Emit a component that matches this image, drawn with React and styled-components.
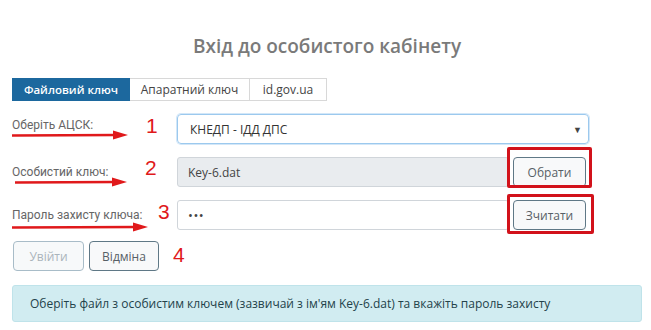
import React from "react";
import styled, { createGlobalStyle } from "styled-components";

const GlobalStyle = createGlobalStyle`
  html, body { margin: 0; padding: 0; background: #fff; }
  body { font-family: "Open Sans", "Noto Sans", sans-serif; color: #333; }
  * { box-sizing: border-box; }
`;

const Page = styled.div`
  width: 651px;
  height: 330px;
  padding: 0 9px 0 12px;
  overflow: hidden;
`;

const Title = styled.h2`
  margin: 0;
  padding-top: 33px;
  height: 78px;
  text-align: center;
  font-size: 19px;
  font-weight: 600;
  color: #7a7a7a;
  line-height: 26px;
`;

const Tabs = styled.div`
  display: flex;
  height: 23px;
`;

const Tab = styled.div`
  display: flex;
  align-items: center;
  justify-content: center;
  width: ${(p) => p.w}px;
  font-size: ${(p) => (p.active ? 11.5 : 12)}px;
  font-weight: ${(p) => (p.active ? 600 : 400)};
  color: ${(p) => (p.active ? "#fff" : "#444")};
  background: ${(p) => (p.active ? "#1c689e" : "#fff")};
  border: 1px solid ${(p) => (p.active ? "#1c689e" : "#d8d8d8")};
  border-left-width: ${(p) => (p.first ? 1 : 0)}px;
`;

const Form = styled.div`
  display: flex;
  flex-direction: column;
  gap: 13px;
  margin-top: 13px;
`;

const Row = styled.div`
  display: grid;
  grid-template-columns: 165px 1fr;
  align-items: center;
  height: 30px;
`;

const Label = styled.div`
  position: relative;
  font-family: Roboto, "Open Sans", sans-serif;
  font-size: 12px;
  color: #666;
  line-height: 18px;
  margin-bottom: ${(p) => p.raise || 0}px;
`;

const ArrowBox = styled.svg`
  position: absolute;
  left: ${(p) => p.x}px;
  top: ${(p) => p.y}px;
`;

const Num = styled.span`
  position: absolute;
  left: ${(p) => p.x}px;
  top: ${(p) => p.y}px;
  font-family: "Liberation Sans", Arial, sans-serif;
  font-size: 21px;
  line-height: 21px;
  color: #e0191b;
`;

const Select = styled.div`
  display: flex;
  align-items: center;
  justify-content: space-between;
  width: 412px;
  height: 30px;
  padding: 0 6px 0 12px;
  border: 1px solid #9cc9ee;
  border-radius: 4px;
  box-shadow: 0 0 0 1px rgba(130, 185, 235, 0.35);
  font-size: 12px;
  color: #333;
`;

const Caret = styled.span`
  font-size: 9px;
  color: #444;
`;

const Control = styled.div`
  display: flex;
  align-items: center;
  gap: 4px;
  width: 409px;
`;

const Input = styled.div`
  flex: 1;
  height: 30px;
  display: flex;
  align-items: center;
  padding: 0 10px;
  border: 1px solid #d0d5da;
  border-radius: 3px;
  background: ${(p) => (p.disabled ? "#e9ecef" : "#fff")};
  font-size: ${(p) => (p.dots ? 13 : 12)}px;
  letter-spacing: ${(p) => (p.dots ? "0.5px" : "0")};
  color: #444;
`;

const BtnWrap = styled.div`
  position: relative;
  display: flex;
`;

const Highlight = styled.div`
  position: absolute;
  top: ${(p) => p.t}px;
  left: ${(p) => p.l}px;
  right: ${(p) => p.r}px;
  bottom: ${(p) => p.b}px;
  border: 3px solid #d2121b;
  border-radius: 2px;
  pointer-events: none;
`;

const Button = styled.button`
  font-family: "Open Sans", "Noto Sans", sans-serif;
  font-weight: 400;
  width: ${(p) => p.w}px;
  height: 30px;
  padding: 0;
  font-size: 12px;
  color: ${(p) => (p.disabled ? "#aab4bb" : "#575f66")};
  background: ${(p) => (p.disabled ? "#f7f9fa" : "#f8f9fa")};
  border: 1px solid ${(p) => (p.disabled ? "#a8bcc8" : "#5f7886")};
  border-radius: 4px;
`;

const Actions = styled.div`
  position: relative;
  display: flex;
  gap: 5px;
  margin-top: 11px;
  padding-left: 1px;
`;

const Alert = styled.div`
  margin-top: 14px;
  height: 37px;
  display: flex;
  align-items: center;
  padding: 0 17px;
  background: #d1ecf1;
  border: 1px solid #bfe3ea;
  border-radius: 3px;
  font-size: 12px;
  color: #23424a;
`;

const Arrow = ({ x, y, w }) => (
  <ArrowBox x={x} y={y} width={w} height={10} viewBox={`0 0 ${w} 10`}>
    <line x1="0" y1="5.5" x2={w - 10} y2="5" stroke="#e0191b" strokeWidth="2.6" />
    <polygon points={`${w - 15},0.5 ${w},5 ${w - 15},9.5`} fill="#e0191b" />
  </ArrowBox>
);

export default function App() {
  return (
    <>
      <GlobalStyle />
      <Page>
        <Title>Вхід до особистого кабінету</Title>
        <Tabs>
          <Tab active first w={118}>Файловий ключ</Tab>
          <Tab w={120}>Апаратний ключ</Tab>
          <Tab w={77}>id.gov.ua</Tab>
        </Tabs>
        <Form>
          <Row>
            <Label raise={8}>
              Оберіть АЦСК:
              <Arrow x={0} y={14} w={116} />
              <Num x={134} y={-1}>1</Num>
            </Label>
            <Select>
              <span>КНЕДП - ІДД ДПС</span>
              <Caret>▼</Caret>
            </Select>
          </Row>
          <Row>
            <Label>
              Особистий ключ:
              <Arrow x={3} y={14} w={112} />
              <Num x={133} y={-6}>2</Num>
            </Label>
            <Control>
              <Input disabled>Key-6.dat</Input>
              <BtnWrap>
                <Highlight t={-10} l={-6} r={-6} b={-1} />
                <Button w={73}>Обрати</Button>
              </BtnWrap>
            </Control>
          </Row>
          <Row>
            <Label>
              Пароль захисту ключа:
              <Arrow x={0} y={16} w={136} />
              <Num x={146} y={-5}>3</Num>
            </Label>
            <Control>
              <Input dots>•••</Input>
              <BtnWrap>
                <Highlight t={-6} l={-6} r={-8} b={-4} />
                <Button w={73}>Зчитати</Button>
              </BtnWrap>
            </Control>
          </Row>
        </Form>
        <Actions>
          <Button disabled w={71}>Увійти</Button>
          <Button w={70}>Відміна</Button>
          <Num x={161} y={3}>4</Num>
        </Actions>
        <Alert>
          Оберіть файл з особистим ключем (зазвичай з ім'ям Key-6.dat) та вкажіть пароль захисту
        </Alert>
      </Page>
    </>
  );
}
